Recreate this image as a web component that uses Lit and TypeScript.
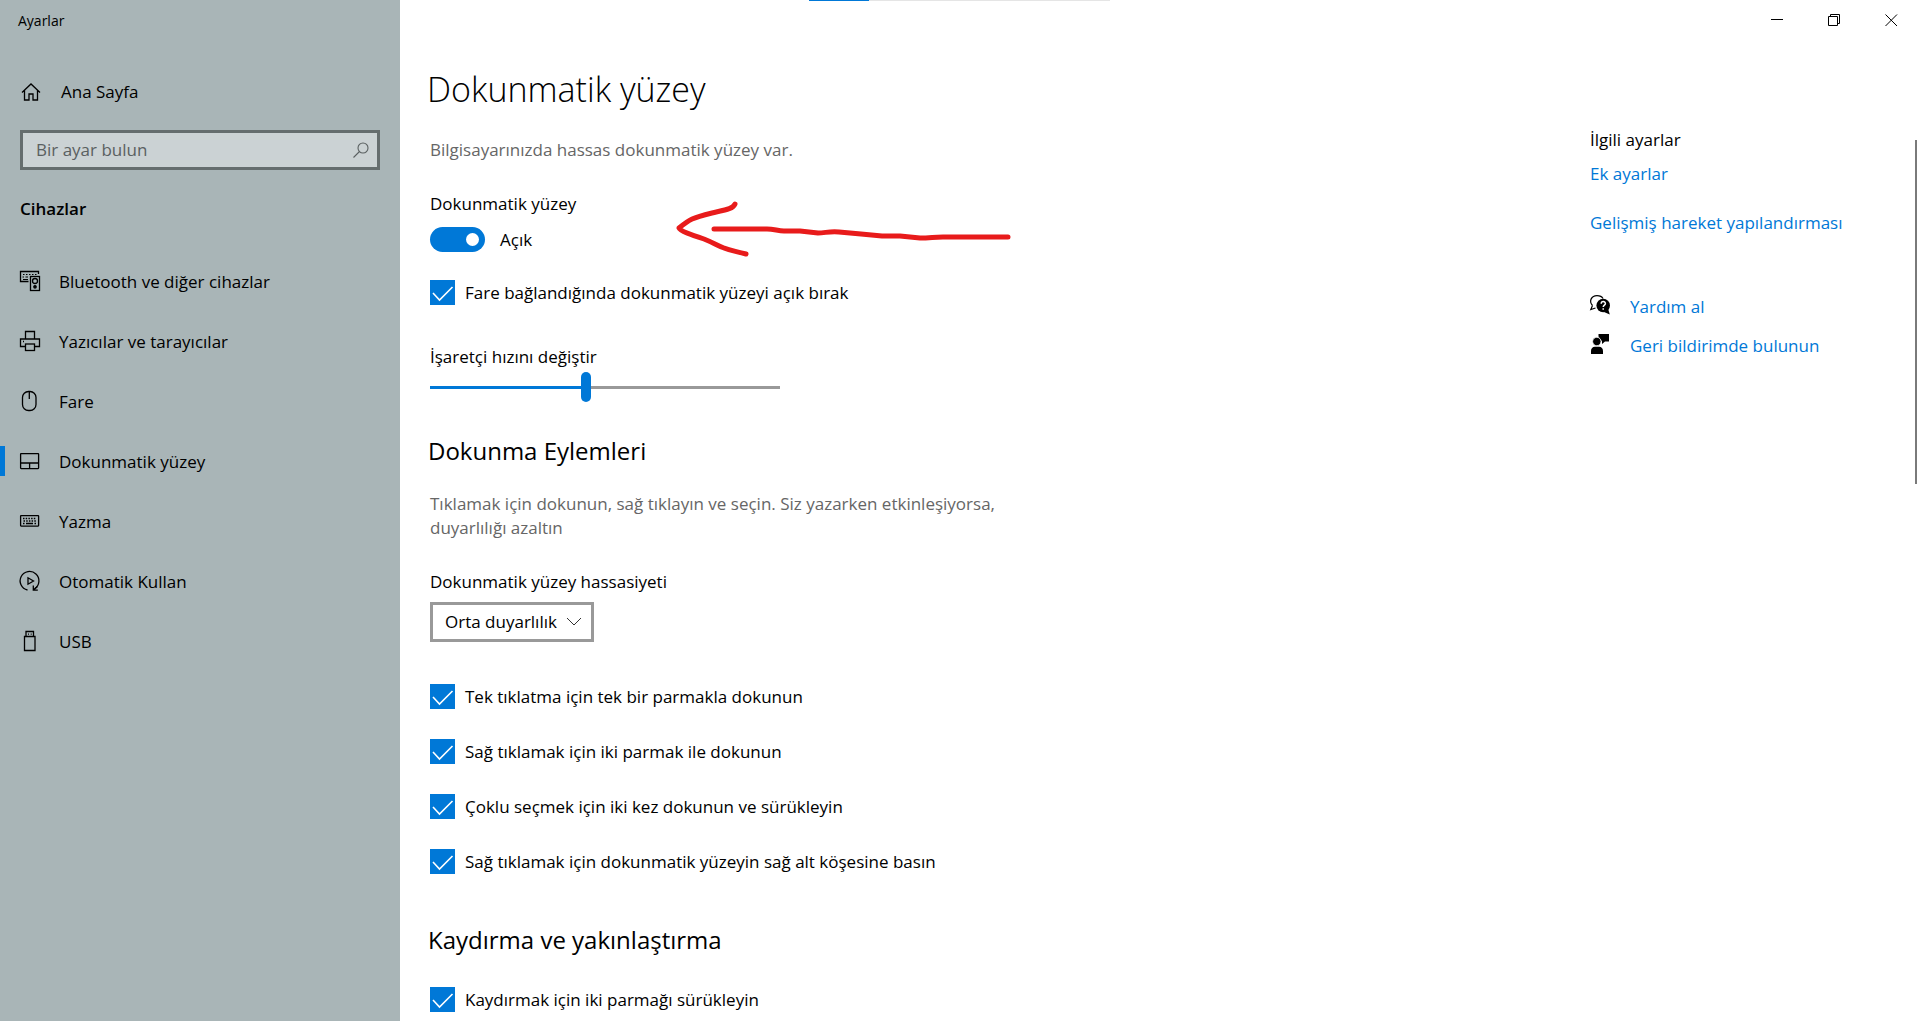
import { LitElement, html, css, svg, nothing } from "lit";
import { customElement, state } from "lit/decorators.js";

const icons = {
  home: svg`<path d="M1 10.500 10 2l9 8.500M3.500 8.500V18h4.500v-6h4v6h4.500V8.500"/>`,
  devices: svg`
    <path d="M8.500 10.500H.5V.5h18v2.500"/>
    <path d="M3 3.500h1.500M6 3.500h1.500M9 3.500h1.500M12 3.500h1.500M15 3.500h1.500M2.500 6h1.500M5.500 6h2.500M3 8.500h5" stroke-width="1.200"/>
    <rect x="10.500" y="5.500" width="9" height="14"/>
    <circle cx="15" cy="10" r="2.500"/><circle cx="15" cy="15.800" r="1.200" fill="currentColor"/>`,
  printer: svg`
    <path d="M5.500 8V.5h9V8M5.500 15.500H.5V8h19v7.500h-5"/>
    <rect x="5.500" y="13" width="9" height="6.500"/><path d="M3 10.500h1"/>`,
  mouse: svg`<rect x="2.500" y=".5" width="13.500" height="19" rx="6"/><path d="M9.300 1v7"/>`,
  touchpad: svg`<rect x=".6" y="2.600" width="18" height="15" rx=".5"/><path d="M.6 12h18M9.600 12v5.500"/>`,
  keyboard: svg`
    <rect x=".6" y="4.600" width="18" height="10.500" rx=".5"/>
    <path d="M3 7.500h13.500M3.500 10h13" stroke-dasharray="1.500 1.200"/><path d="M3 12.500h1.500M6 12.500h7M14.500 12.500H16"/>`,
  autoplay: svg`
    <path d="M7.500 19A9.400 9.400 0 1 1 14.500 17.800"/><path d="M13.300 14.500v4.600h4.500M13.500 19l4-3.500"/>
    <path d="M8 6.800v6.400l5.500-3.200z"/>`,
  usb: svg`<path d="M4.500 5.500h10.500v14H4.500zM6 5.500v-5h7.500v5M8 3.200h1M10.700 3.200h1"/>`,
};

interface NavItem { icon: keyof typeof icons; label: string; current?: boolean; }

const navItems: NavItem[] = [
  { icon: "devices", label: "Bluetooth ve diğer cihazlar" },
  { icon: "printer", label: "Yazıcılar ve tarayıcılar" },
  { icon: "mouse", label: "Fare" },
  { icon: "touchpad", label: "Dokunmatik yüzey", current: true },
  { icon: "keyboard", label: "Yazma" },
  { icon: "autoplay", label: "Otomatik Kullan" },
  { icon: "usb", label: "USB" },
];

const tapOptions = [
  "Tek tıklatma için tek bir parmakla dokunun",
  "Sağ tıklamak için iki parmak ile dokunun",
  "Çoklu seçmek için iki kez dokunun ve sürükleyin",
  "Sağ tıklamak için dokunmatik yüzeyin sağ alt köşesine basın",
];

const icon = (name: keyof typeof icons) =>
  html`<svg class="icon" viewBox="0 0 20 20" aria-hidden="true">${icons[name]}</svg>`;

@customElement("app-root")
export class AppRoot extends LitElement {
  static styles = css`
    :host {
      display: block;
      height: 100vh;
      overflow: hidden;
      font: 380 17px/24px "Open Sans", "Noto Sans", sans-serif;
      color: #000;
      background: #fff;
    }
    * { box-sizing: border-box; }
    h1, h2, h3, p { margin: 0; padding: 0; font: inherit; }
    a { color: inherit; text-decoration: none; }
    button, input, select { font: inherit; color: inherit; margin: 0; }
    .icon {
      width: 20px; height: 20px; flex: none; overflow: visible;
      fill: none; stroke: currentColor; stroke-width: 1.3;
    }
    .window { display: flex; height: 100%; position: relative; }

    .sidebar { flex: 0 0 400px; background: #a9b5b7; }
    .app-name { height: 42px; padding-left: 18px; font-size: 14px; line-height: 42px; }
    .home { display: flex; align-items: center; gap: 20px; height: 60px; margin-top: 20px; padding-left: 21px; }
    .search {
      display: flex; align-items: center; height: 40px; margin: 8px 20px 0;
      border: 3px solid #656d6e; background: #cbd2d4; color: #5a6061; padding: 0 8px 0 13px;
    }
    .search input { flex: 1; min-width: 0; border: 0; padding: 0; background: none; outline: none; }
    .search input::placeholder { color: #5a6061; opacity: 1; }
    .search .icon { width: 16px; height: 16px; stroke-width: 1.1; }
    .category { margin: 27px 20px 30px; font-weight: 600; }
    .nav-link { display: flex; align-items: center; gap: 19px; height: 60px; padding-left: 20px; }
    .nav-link.current { border-left: 5px solid #0078d7; padding-left: 15px; height: 30px; margin: 15px 0; }
    .nav-link span { padding-top: 2px; }

    .main { flex: 1; min-width: 0; display: flex; flex-direction: column; }
    .titlebar { display: flex; justify-content: flex-end; height: 40px; flex: none; }
    .caption-button { width: 57px; border: 0; background: none; padding: 0; display: grid; place-items: center; }
    .caption-button svg { width: 13px; height: 13px; fill: none; stroke: #000; stroke-width: 1; }
    .progress {
      position: absolute; top: 0; left: 809px; width: 301px; height: 1px;
      background: linear-gradient(to right, #0078d7 20%, #e5e5e5 20%);
    }

    .body { flex: 1; min-height: 0; display: flex; justify-content: space-between; }
    .content { width: 600px; padding-left: 30px; flex: none; }
    .title { font-size: 34px; line-height: 46px; padding-top: 26px; margin-left: -3px; font-weight: 320; }
    .section { font-size: 24px; line-height: 32px; margin-left: -2px; }
    .hint { color: #666; }
    .intro { margin-top: 26px; }
    .power { position: relative; margin-top: 30px; }
    .switch-row { display: flex; align-items: center; gap: 15px; margin-top: 11px; height: 25px; }
    .switch {
      appearance: none; width: 55px; height: 25px; border-radius: 13px; background: #0078d7;
      display: flex; align-items: center; padding: 0 6px;
    }
    .switch::before { content: ""; width: 13px; height: 13px; border-radius: 50%; background: #fff; }
    .switch:checked { justify-content: flex-end; }
    .annotation {
      position: absolute; left: 240px; top: 3px; width: 350px; height: 70px;
      fill: none; stroke: #e81b1b; stroke-width: 5; stroke-linecap: round; stroke-linejoin: round;
      pointer-events: none;
    }
    .check { display: flex; align-items: center; gap: 10px; height: 25px; width: fit-content; }
    .box { display: grid; width: 25px; height: 25px; flex: none; }
    .box > * { grid-area: 1 / 1; }
    .box input { appearance: none; width: 25px; height: 25px; border: 2px solid #666; }
    .box input:checked { background: #0078d7; border-color: #0078d7; }
    .box svg { fill: none; stroke: #fff; stroke-width: 1.6; pointer-events: none; }
    .keep-on { margin-top: 28px; }
    .speed { display: flex; flex-direction: column; margin-top: 40px; }
    .slider {
      appearance: none; width: 350px; height: 30px; margin-top: 3px;
      background: linear-gradient(to right, #0078d7 var(--fill), #999 var(--fill)) center / 100% 3px no-repeat;
    }
    .slider::-webkit-slider-thumb {
      appearance: none; width: 10px; height: 30px; border-radius: 5px; background: #0078d7;
    }
    .taps-title { margin-top: 33px; }
    .taps-hint { margin-top: 25px; }
    .sensitivity { display: flex; flex-direction: column; align-items: flex-start; margin-top: 30px; }
    .select { display: grid; margin-top: 8px; }
    .select > * { grid-area: 1 / 1; }
    .select select {
      appearance: none; height: 40px; width: 164px; padding: 0 0 0 12px;
      border: 3px solid #999; border-radius: 0; background: #fff;
    }
    .select svg {
      width: 16px; height: 10px; place-self: center end; margin-right: 12px;
      fill: none; stroke: #333; stroke-width: 1; pointer-events: none;
    }
    .tap-list { display: flex; flex-direction: column; gap: 30px; margin-top: 42px; }
    .scroll-title { margin-top: 50px; }
    .scroll-check { margin-top: 31px; }

    .related { width: 330px; padding-top: 88px; flex: none; display: flex; flex-direction: column; align-items: flex-start; }
    .related a { color: #0078d7; }
    .more { margin-top: 10px; }
    .gesture { margin-top: 25px; }
    .support { display: flex; flex-direction: column; gap: 15px; margin-top: 60px; }
    .support a { display: flex; align-items: flex-start; gap: 20px; }
    .support svg { width: 20px; height: 20px; overflow: visible; color: #000; }
    .scrollbar { position: absolute; right: 3px; top: 140px; width: 2px; height: 344px; background: #7a7a7a; }
  `;

  @state() private speed = 5;

  private check(label: string, cls = "") {
    return html`<label class="check ${cls}">
      <span class="box">
        <input type="checkbox" checked />
        <svg viewBox="0 0 25 25" aria-hidden="true"><path d="M3 13l6.500 7L22.500 7"/></svg>
      </span>
      <span>${label}</span>
    </label>`;
  }

  render() {
    const fill = `${((this.speed - 1) / 9) * 100}%`;
    return html`
      <div class="window">
        <aside class="sidebar">
          <div class="app-name">Ayarlar</div>
          <a class="home" href="#home">${icon("home")}<span>Ana Sayfa</span></a>
          <div class="search">
            <input type="text" placeholder="Bir ayar bulun" aria-label="Bir ayar bulun" />
            <svg class="icon" viewBox="0 0 16 16" aria-hidden="true">
              <circle cx="10" cy="6" r="5"/><path d="M6.500 9.500.5 15.500"/>
            </svg>
          </div>
          <h3 class="category">Cihazlar</h3>
          <nav>
            ${navItems.map((n) => html`<a class="nav-link ${n.current ? "current" : ""}" href="#${n.icon}"
              aria-current=${n.current ? "page" : nothing}>${icon(n.icon)}<span>${n.label}</span></a>`)}
          </nav>
        </aside>

        <main class="main">
          <div class="titlebar">
            <button class="caption-button" aria-label="Simge durumuna küçült">
              <svg viewBox="0 0 13 13"><path d="M0 5.500h12"/></svg>
            </button>
            <button class="caption-button" aria-label="Önceki boyut">
              <svg viewBox="0 0 13 13"><path d="M.5 2.500h9v9h-9zM2.500 2.500v-2h9v9H9.500"/></svg>
            </button>
            <button class="caption-button" aria-label="Kapat">
              <svg viewBox="0 0 13 13"><path d="M.5.5l11.500 11.500M12 .5.5 12"/></svg>
            </button>
          </div>
          <div class="body">
            <div class="content">
              <h1 class="title">Dokunmatik yüzey</h1>
              <p class="hint intro">Bilgisayarınızda hassas dokunmatik yüzey var.</p>
              <div class="power">
                <label for="power">Dokunmatik yüzey</label>
                <div class="switch-row">
                  <input class="switch" id="power" type="checkbox" role="switch" checked />
                  <span>Açık</span>
                </div>
                <svg class="annotation" viewBox="670 195 350 70" aria-hidden="true">
                  <path d="M735 204C733 209 725 210 712 213C692 218 690 219 679 228C680 231 692 235 704 239C714 243 718 246 724 248C731 251 736 251 746 254"/>
                  <path d="M714 229H767C774 229 778 231 784 231H800L818 233C825 233 830 231 839 232L861 234L882 236H900L920 238C930 238 934 237 943 237H1008"/>
                </svg>
              </div>
              ${this.check("Fare bağlandığında dokunmatik yüzeyi açık bırak", "keep-on")}
              <div class="speed">
                <label for="speed">İşaretçi hızını değiştir</label>
                <input class="slider" id="speed" type="range" min="1" max="10" .value=${String(this.speed)}
                  style="--fill: ${fill}"
                  @input=${(e: Event) => { this.speed = Number((e.target as HTMLInputElement).value); }} />
              </div>
              <h2 class="section taps-title">Dokunma Eylemleri</h2>
              <p class="hint taps-hint">Tıklamak için dokunun, sağ tıklayın ve seçin. Siz yazarken etkinleşiyorsa, duyarlılığı azaltın</p>
              <div class="sensitivity">
                <label for="sensitivity">Dokunmatik yüzey hassasiyeti</label>
                <div class="select">
                  <select id="sensitivity"><option>Orta duyarlılık</option></select>
                  <svg viewBox="0 0 16 10" aria-hidden="true"><path d="M1 1l7 7 7-7"/></svg>
                </div>
              </div>
              <div class="tap-list">${tapOptions.map((t) => this.check(t))}</div>
              <h2 class="section scroll-title">Kaydırma ve yakınlaştırma</h2>
              ${this.check("Kaydırmak için iki parmağı sürükleyin", "scroll-check")}
            </div>

            <aside class="related">
              <h3>İlgili ayarlar</h3>
              <a class="more" href="#more">Ek ayarlar</a>
              <a class="gesture" href="#gestures">Gelişmiş hareket yapılandırması</a>
              <div class="support">
                <a href="#help">
                  <svg viewBox="0 0 20 20" aria-hidden="true">
                    <path d="M2.500 10.500C-1.500 6 1.500.6 7 .6c3 0 5 1 6 3M2.500 10.500.8 14.500l4.700-1.500" fill="none" stroke="currentColor" stroke-width="1.200"/>
                    <circle cx="13.200" cy="10.500" r="6.800" fill="currentColor"/>
                    <path d="M14 17l5.800 2.500-1.800-6z" fill="currentColor"/>
                    <path d="M11.200 8.800c0-3 4.200-2.800 4.200-.3 0 1.700-2.200 1.600-2.200 3.600M13.200 13.300v1.500" fill="none" stroke="#fff" stroke-width="1.500"/>
                  </svg>
                  <span>Yardım al</span>
                </a>
                <a href="#feedback">
                  <svg viewBox="0 0 20 20" aria-hidden="true" fill="currentColor">
                    <path d="M8.500 0H19v7.500h-4L12 10V7.500L8.500 2.500z"/>
                    <circle cx="6.800" cy="7.500" r="4.200" stroke="#fff" stroke-width=".8"/>
                    <path d="M1 20v-3c0-2.500 1.500-4.300 4-4.300h4c2.500 0 4 1.800 4 4.300v3z"/>
                  </svg>
                  <span>Geri bildirimde bulunun</span>
                </a>
              </div>
            </aside>
          </div>
        </main>
        <div class="progress"></div>
        <div class="scrollbar"></div>
      </div>
    `;
  }
}
